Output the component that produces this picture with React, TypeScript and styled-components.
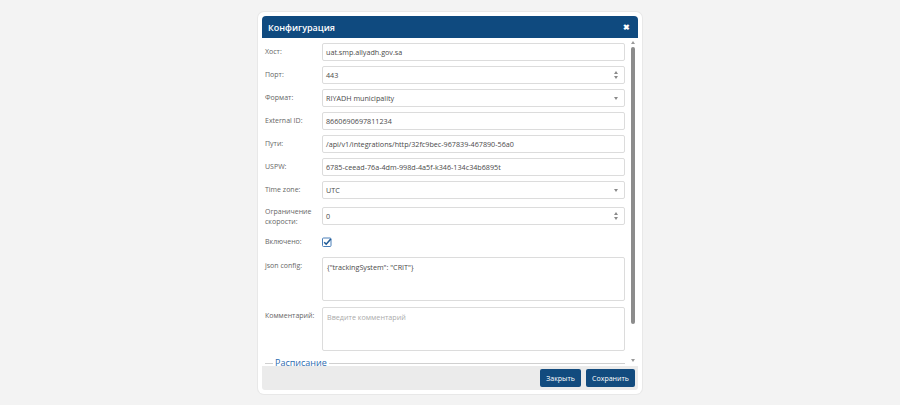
import React from "react";
import styled, { createGlobalStyle } from "styled-components";

const GlobalStyle = createGlobalStyle`
  html, body {
    margin: 0;
    padding: 0;
    background: #f3f3f3;
    font-family: "Open Sans", "Liberation Sans", sans-serif;
  }
`;

const Page = styled.div`
  height: 405px;
  display: flex;
  justify-content: center;
  align-items: flex-start;
  padding-top: 12px;
  box-sizing: border-box;
`;

const Modal = styled.div`
  width: 384px;
  background: #ffffff;
  border-radius: 6px;
  padding: 4px;
  box-sizing: border-box;
  box-shadow: 0 0 0 1px #e8e8e8;
`;

const Header = styled.div`
  height: 22px;
  background: #0f4a7f;
  border-radius: 4px 4px 0 0;
  display: flex;
  align-items: center;
  justify-content: space-between;
  padding: 0 8px 0 6px;
`;

const Title = styled.div`
  color: #ffffff;
  font-size: 9px;
  font-weight: 600;
`;

const CloseButton = styled.div`
  color: #ffffff;
  font-size: 8px;
  font-weight: 700;
  line-height: 1;
  cursor: pointer;
`;

const Body = styled.div`
  height: 328px;
  display: flex;
  flex-direction: row;
`;

const Content = styled.div`
  flex: 1;
  overflow: hidden;
  padding: 5px 0 0 3px;
  display: flex;
  flex-direction: column;
`;

const Row = styled.div<{ $gap?: number; $top?: boolean }>`
  display: flex;
  flex-direction: row;
  align-items: ${(p) => (p.$top ? "flex-start" : "center")};
  margin-bottom: ${(p) => p.$gap ?? 5}px;
`;

const Label = styled.div`
  width: 57px;
  flex-shrink: 0;
  font-size: 7px;
  color: #666666;
  line-height: 18px;
`;

const TwoLineLabel = styled(Label)`
  line-height: 10px;
  padding-top: 2px;
`;

const Field = styled.div<{ $height?: number }>`
  width: 303px;
  height: ${(p) => p.$height ?? 18}px;
  border: 1px solid #dcdcdc;
  border-radius: 2px;
  box-sizing: border-box;
  display: flex;
  align-items: ${(p) => (p.$height ? "flex-start" : "center")};
  justify-content: space-between;
  padding: ${(p) => (p.$height ? "4px 4px" : "0 6px 0 3px")};
  font-size: 7.2px;
  color: #4a4a4a;
  background: #ffffff;
`;

const Placeholder = styled.span`
  color: #ababab;
`;

const Spinner = styled.div`
  display: flex;
  flex-direction: column;
  gap: 2px;
  align-items: center;
`;

const Arrow = styled.div<{ $up?: boolean; $color?: string }>`
  width: 0;
  height: 0;
  border-left: 2.5px solid transparent;
  border-right: 2.5px solid transparent;
  ${(p) =>
    p.$up
      ? `border-bottom: 3px solid ${p.$color ?? "#8a8a8a"};`
      : `border-top: 3px solid ${p.$color ?? "#8a8a8a"};`}
`;

const CheckBox = styled.div`
  width: 10px;
  height: 10px;
  display: flex;
`;

const Fieldset = styled.div`
  display: flex;
  align-items: center;
  margin-top: 1px;
  width: 360px;
  gap: 2px;
`;

const Line = styled.div<{ $w?: number }>`
  height: 1px;
  background: #d0d0d0;
  ${(p) => (p.$w ? `width: ${p.$w}px;` : "flex: 1;")}
`;

const Legend = styled.div`
  color: #2d6cb0;
  font-size: 9px;
  line-height: 10px;
`;

const ScrollColumn = styled.div`
  width: 10px;
  display: flex;
  flex-direction: column;
  align-items: center;
  padding-top: 3px;
  box-sizing: border-box;
`;

const Thumb = styled.div`
  width: 4px;
  height: 277px;
  margin: 3px 0 0;
  border-radius: 2px;
  background: #8c8c8c;
`;

const ScrollDown = styled.div`
  margin-top: auto;
  margin-bottom: 4px;
`;

const Footer = styled.div`
  height: 24px;
  background: #ebebeb;
  border-radius: 0 0 3px 3px;
  display: flex;
  align-items: center;
  justify-content: flex-end;
  gap: 5px;
  padding-right: 3px;
`;

const Button = styled.button<{ $w: number }>`
  width: ${(p) => p.$w}px;
  height: 18px;
  background: #124b7e;
  border: none;
  border-radius: 2px;
  color: #ffffff;
  font-family: "Open Sans", "Liberation Sans", sans-serif;
  font-size: 7px;
  padding: 0;
  cursor: pointer;
`;

const Select = ({ value }: { value: string }) => (
  <Field>
    <span>{value}</span>
    <Arrow />
  </Field>
);

const NumberInput = ({ value }: { value: string }) => (
  <Field>
    <span>{value}</span>
    <Spinner>
      <Arrow $up />
      <Arrow />
    </Spinner>
  </Field>
);

export default function App() {
  return (
    <>
      <GlobalStyle />
      <Page>
        <Modal>
          <Header>
            <Title>Конфигурация</Title>
            <CloseButton>✖</CloseButton>
          </Header>
          <Body>
            <Content>
              <Row>
                <Label>Хост:</Label>
                <Field>uat.smp.allyadh.gov.sa</Field>
              </Row>
              <Row>
                <Label>Порт:</Label>
                <NumberInput value="443" />
              </Row>
              <Row>
                <Label>Формат:</Label>
                <Select value="RIYADH municipality" />
              </Row>
              <Row>
                <Label>External ID:</Label>
                <Field>8660690697811234</Field>
              </Row>
              <Row>
                <Label>Пути:</Label>
                <Field>/api/v1/integrations/http/32fc9bec-967839-467890-56a0</Field>
              </Row>
              <Row>
                <Label>USPW:</Label>
                <Field>6785-ceead-76a-4dm-998d-4a5f-k346-134c34b6895t</Field>
              </Row>
              <Row $gap={6}>
                <Label>Time zone:</Label>
                <Select value="UTC" />
              </Row>
              <Row $gap={6}>
                <TwoLineLabel>
                  Ограничение
                  <br />
                  скорости:
                </TwoLineLabel>
                <NumberInput value="0" />
              </Row>
              <Row $gap={6}>
                <Label>Включено:</Label>
                <CheckBox>
                  <svg width="10" height="10" viewBox="0 0 10 10">
                    <rect x="0.5" y="1" width="8.5" height="8.5" rx="1" fill="#fff" stroke="#4a7fb8" />
                    <path d="M2.2 5.2 L4.2 7.2 L8.8 2" fill="none" stroke="#1f5a96" strokeWidth="1.6" />
                  </svg>
                </CheckBox>
              </Row>
              <Row $top $gap={6}>
                <Label>json config:</Label>
                <Field $height={44}>{'{"trackingSystem": "CRIT"}'}</Field>
              </Row>
              <Row $top $gap={6}>
                <Label>Комментарий:</Label>
                <Field $height={44}>
                  <Placeholder>Введите комментарий</Placeholder>
                </Field>
              </Row>
              <Fieldset>
                <Line $w={8} />
                <Legend>Расписание</Legend>
                <Line />
              </Fieldset>
            </Content>
            <ScrollColumn>
              <Arrow $up $color="#9a9a9a" />
              <Thumb />
              <ScrollDown>
                <Arrow $color="#9a9a9a" />
              </ScrollDown>
            </ScrollColumn>
          </Body>
          <Footer>
            <Button $w={41}>Закрыть</Button>
            <Button $w={49}>Сохранить</Button>
          </Footer>
        </Modal>
      </Page>
    </>
  );
}
